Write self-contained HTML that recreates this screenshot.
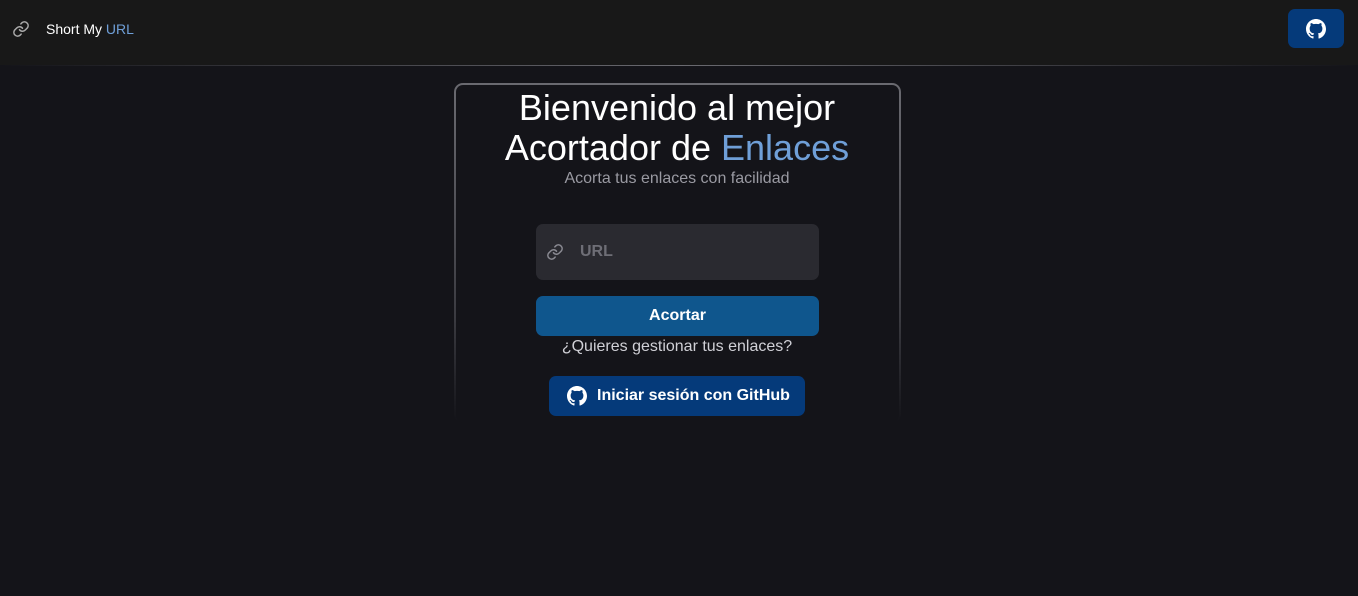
<!DOCTYPE html>
<html><head><meta charset="utf-8"><style>
*{box-sizing:border-box;margin:0;padding:0}
body{width:1358px;height:596px;background:#141419;font-family:"Liberation Sans",sans-serif;position:relative;overflow:hidden}
.hdr{position:absolute;left:0;top:0;width:1358px;height:65px;background:#181818}
.line{position:absolute;left:0;top:65px;width:1358px;height:1px;background:linear-gradient(90deg,rgba(120,120,125,0),#6a6a70 50%,rgba(120,120,125,0))}
.brand{position:absolute;left:46px;top:21px;font-size:14px;color:#fff}
.brand span{color:#6f9fd8}
.gh{position:absolute;left:1288px;top:9px;width:56px;height:39px;background:#053a7a;border-radius:7px;display:flex;align-items:center;justify-content:center}
.card{position:absolute;left:454px;top:83px;width:447px;height:340px;border-radius:9px;border:2px solid transparent;background:linear-gradient(#141419,#141419) padding-box,linear-gradient(#6a6a70,#3a3a40 70%,rgba(20,20,25,0)) border-box;border-bottom:none}
h1{position:absolute;left:-2px;width:100%;top:88px;text-align:center;font-weight:400;font-size:36px;line-height:40px;color:#fff}
h1 span{color:#6f9fd8}
.sub{position:absolute;left:-2px;width:100%;top:170px;text-align:center;font-size:16px;color:#9a9aa2}
.inp{position:absolute;left:536px;top:224px;width:283px;height:56px;background:#2a2a30;border-radius:7px}
.inp .t{position:absolute;left:44px;top:19px;font-size:16px;font-weight:700;color:#6e6e76}
.btn{position:absolute;left:536px;top:296px;width:283px;height:40px;background:#0f568d;border-radius:7px;color:#fff;font-weight:700;font-size:16px;text-align:center;line-height:40px}
.q{position:absolute;left:-2px;width:100%;top:338px;text-align:center;font-size:16px;color:#d0d0d6}
.gl{position:absolute;left:549px;top:376px;width:256px;height:40px;background:#053a7a;border-radius:7px;color:#fff;font-weight:700;font-size:16px;display:flex;align-items:center;padding-left:18px;gap:10px}
</style></head><body>
<div class="hdr"></div><div class="line"></div>
<svg style="position:absolute;left:12px;top:20px" width="18" height="18" viewBox="0 0 24 24" fill="none" stroke="#aaa" stroke-width="2" stroke-linecap="round"><path d="M10 13a5 5 0 0 0 7.5.5l3-3a5 5 0 0 0-7-7l-1.7 1.7"/><path d="M14 11a5 5 0 0 0-7.5-.5l-3 3a5 5 0 0 0 7 7l1.7-1.7"/></svg>
<div class="brand">Short My <span>URL</span></div>
<div class="gh"><svg width="20" height="20" viewBox="0 0 16 16" fill="#fff"><path d="M8 0C3.58 0 0 3.58 0 8c0 3.54 2.29 6.53 5.47 7.59.4.07.55-.17.55-.38 0-.19-.01-.82-.01-1.49-2.01.37-2.53-.49-2.69-.94-.09-.23-.48-.94-.82-1.13-.28-.15-.68-.52-.01-.53.63-.01 1.08.58 1.23.82.72 1.21 1.87.87 2.33.66.07-.52.28-.87.51-1.07-1.78-.2-3.64-.89-3.64-3.95 0-.87.31-1.59.82-2.15-.08-.2-.36-1.02.08-2.12 0 0 .67-.21 2.2.82.64-.18 1.32-.27 2-.27.68 0 1.36.09 2 .27 1.53-1.04 2.2-.82 2.2-.82.44 1.1.16 1.92.08 2.12.51.56.82 1.27.82 2.15 0 3.07-1.87 3.75-3.65 3.95.29.25.54.73.54 1.48 0 1.07-.01 1.93-.01 2.2 0 .21.15.46.55.38A8.013 8.013 0 0016 8c0-4.42-3.58-8-8-8z"/></svg></div>
<div class="card"></div>
<h1>Bienvenido al mejor<br>Acortador de <span>Enlaces</span></h1>
<div class="sub">Acorta tus enlaces con facilidad</div>
<div class="inp"><svg style="position:absolute;left:10px;top:19px" width="18" height="18" viewBox="0 0 24 24" fill="none" stroke="#8a8a92" stroke-width="2" stroke-linecap="round"><path d="M10 13a5 5 0 0 0 7.5.5l3-3a5 5 0 0 0-7-7l-1.7 1.7"/><path d="M14 11a5 5 0 0 0-7.5-.5l-3 3a5 5 0 0 0 7 7l1.7-1.7"/></svg><div class="t">URL</div></div>
<div class="btn">Acortar</div>
<div class="q">¿Quieres gestionar tus enlaces?</div>
<div class="gl"><svg width="20" height="20" viewBox="0 0 16 16" fill="#fff"><path d="M8 0C3.58 0 0 3.58 0 8c0 3.54 2.29 6.53 5.47 7.59.4.07.55-.17.55-.38 0-.19-.01-.82-.01-1.49-2.01.37-2.53-.49-2.69-.94-.09-.23-.48-.94-.82-1.13-.28-.15-.68-.52-.01-.53.63-.01 1.08.58 1.23.82.72 1.21 1.87.87 2.33.66.07-.52.28-.87.51-1.07-1.78-.2-3.64-.89-3.64-3.95 0-.87.31-1.59.82-2.15-.08-.2-.36-1.02.08-2.12 0 0 .67-.21 2.2.82.64-.18 1.32-.27 2-.27.68 0 1.36.09 2 .27 1.53-1.04 2.2-.82 2.2-.82.44 1.1.16 1.92.08 2.12.51.56.82 1.27.82 2.15 0 3.07-1.87 3.75-3.65 3.95.29.25.54.73.54 1.48 0 1.07-.01 1.93-.01 2.2 0 .21.15.46.55.38A8.013 8.013 0 0016 8c0-4.42-3.58-8-8-8z"/></svg>Iniciar sesión con GitHub</div>
</body></html>
